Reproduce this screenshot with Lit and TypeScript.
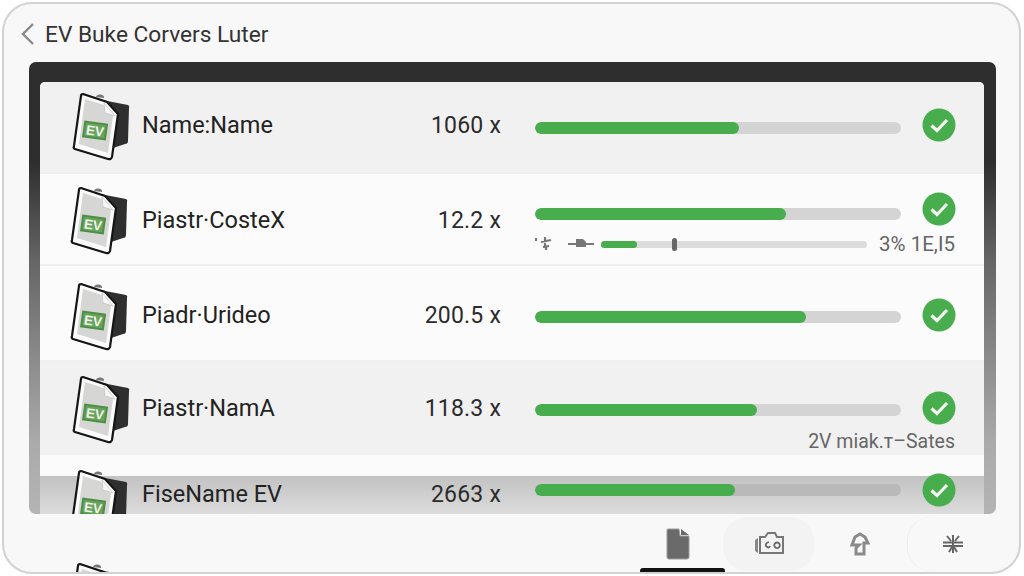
import { LitElement, html, css } from "lit";
import { customElement } from "lit/decorators.js";

const fileIcon = (clip = false) => html`<svg class="file" viewBox="0 0 60 70" width="60" height="70" aria-hidden="true">
  ${clip ? html`<path d="M6 14 Q1 16 0 24 L-1 36 Q1 40 5 39 Z" fill="#2b2b2b"/>` : null}
  <path d="M30 10 L56 15 Q58 16 57 18 L56 51 Q56 54 53 54 L38 59 Z" fill="#2f2f2f"/>
  <path d="M24 7 a4 3 0 0 1 8 1 Z" fill="#777"/>
  <path d="M11 4 L35 12 L46 24 L40 67 Q39 70 36 69 L3 59 Q1 58 2 56 L9 6 Q9 4 11 4 Z" fill="#fbfbfb" stroke="#151515" stroke-width="2.2"/>
  <path d="M13 9 L32 15 L41 26 L36 63 L7 54 Z" fill="#d6d6d5"/>
  <path d="M32 13 L33 23 L43 26 Z" fill="#f7f7f7" stroke="#c4c4c4" stroke-width=".8"/>
  <g transform="rotate(8 23 41)">
    <rect x="11" y="32" width="24" height="17" fill="#4d8f45"/>
    <rect x="13" y="34" width="20" height="13" fill="#6aa35f"/>
    <text x="23" y="45.5" text-anchor="middle" class="ev">EV</text>
  </g>
</svg>`;

const check = (mark = false) => html`<svg class="check" viewBox="0 0 34 34" width="34" height="34" aria-hidden="true">
  ${mark ? html`<path d="M4 24 L-2 30 L3 32 L8 29 Z" fill="#9a9a9a"/>` : null}
  <circle cx="17" cy="17" r="16.5" fill="#48ad4d"/>
  <path d="M9.5 17.5 L15 22.5 L25 12" fill="none" stroke="#f4f8f2" stroke-width="3.2"/>
</svg>`;

type Row = { name: string; value: string; pct: number; cls: string; sub?: string; clip?: boolean };
const rows: Row[] = [
  { name: "Name:Name", value: "1060 x", pct: 55.7, cls: "r1" },
  { name: "Piastr·CosteX", value: "12.2 x", pct: 68.6, cls: "r2", sub: "3% 1E,I5", clip: true },
  { name: "Piadr·Urideo", value: "200.5 x", pct: 74, cls: "r3", clip: true },
  { name: "Piastr·NamA", value: "118.3 x", pct: 60.7, cls: "r4", sub: "2V miak.т–Sates" },
  { name: "FiseName EV", value: "2663 x", pct: 54.6, cls: "r5", clip: true },
];

@customElement("app-root")
export class AppRoot extends LitElement {
  static styles = css`
    :host { display: block; box-sizing: border-box; width: 1024px; height: 576px; padding: 2px 3px 2px 2px; background: #fff; overflow: hidden;
      font-family: Roboto, "Liberation Sans", sans-serif; color: #1d1d1d; }
    .frame { box-sizing: border-box; width: 100%; height: 100%; border: 2px solid #d2d2d2; border-radius: 30px;
      background: #f8f8f8; display: flex; flex-direction: column; overflow: hidden; padding: 0 23px 0 25px; }
    .head { box-sizing: border-box; height: 58px; flex: none; display: flex; align-items: center; gap: 9px; padding: 2px 0 0 0; margin-left: -9px; }
    .head svg { flex: none; }
    .title { font-size: 22.7px; color: #333; white-space: nowrap; }
    .panel { height: 452px; flex: none; box-sizing: border-box; padding: 20px 12px 0 11px; border-radius: 7px; overflow: hidden;
      background: linear-gradient(180deg, #2e2e2e 0, #2e2e2e 100px, #666 200px, #aaa 380px, #b4b4b4 100%); }
    .list { height: 432px; overflow: hidden; border-radius: 5px 5px 0 0; background: #fafafa; }
    .row { display: grid; grid-template-columns: 102px 230px 129px 366px 89px; box-sizing: border-box;
      grid-template-rows: 34px auto; align-content: start; align-items: center; border-bottom: 2px solid #efefef; }
    .icon { grid-column: 1; grid-row: 1; justify-self: start; margin-left: 32px; }
    .file { display: block; overflow: visible; }
    .ev { font: 700 13.5px "Liberation Sans", sans-serif; fill: #eef5e8; }
    .name { grid-column: 2; grid-row: 1; font-size: 23.5px; white-space: nowrap; color: #222; }
    .value { grid-column: 3; grid-row: 1; text-align: right; font-size: 23px; letter-spacing: .2px; white-space: nowrap; color: #2b2b2b; }
    .track { grid-column: 4; grid-row: 1; margin-left: 34px; width: 366px; height: 12px; border-radius: 6px; background: #d4d4d4; overflow: hidden; }
    .fill { height: 100%; border-radius: 6px; background: #48ad4d; }
    .status { grid-column: 5; grid-row: 1; margin-left: 55px; height: 34px; }
    .check { display: block; overflow: visible; }
    .r1 { height: 92px; padding-top: 26px; background: #f1f1f1; }
    .r2 { height: 92px; padding-top: 18px; background: #fbfbfb; }
    .r3 { height: 96px; padding-top: 32px; background: #fbfbfb; }
    .r4 { height: 93px; padding-top: 29px; background: #f1f1f1; border-bottom: 0; }
    .r5 { height: 59px; padding-top: 18px; border-bottom: 0; grid-template-rows: 34px;
      background: linear-gradient(180deg, #fbfbfb 0, #fbfbfb 21px, #c2c2c2 21px, #dcdcdc 100%); }
    .r1 .track { margin-top: 5px; }
    .r3 .track, .r4 .track { margin-top: 4px; }
    .r2 .track { margin-top: 10px; }
    .r2 .name, .r2 .value { grid-row: 1 / span 2; margin-bottom: 6px; }
    .r2 .icon { grid-row: 1 / span 2; margin-top: -8px; margin-left: 30px; }
    .r3 .icon { margin-left: 30px; }
    .r5 .icon { align-self: start; margin-top: -6px; margin-left: 30px; }
    .r5 .name, .r5 .value { margin-top: 8px; }
    .r5 .track { background: #b9b9b9; }
    .sub { grid-column: 4 / span 2; grid-row: 2; display: flex; align-items: center; justify-content: flex-end;
      font-size: 19.5px; color: #666; white-space: nowrap; height: 20px; }
    .r2 .sub { margin-top: 8px; padding-left: 34px; font-size: 20.5px; margin-right: 1px; }
    .r4 .sub { margin-top: 6px; margin-right: 1px; }
    .tools { width: 66px; flex: none; display: block; }
    .mini { width: 266px; flex: none; height: 7px; border-radius: 4px; background: #dcdcdc; position: relative; }
    .mini i { display: block; width: 36px; height: 100%; border-radius: 4px; background: #48ad4d; }
    .mini b { position: absolute; left: 71px; top: -3px; width: 5px; height: 13px; border-radius: 3px; background: #666; }
    .mini-label { margin-left: auto; }
    .foot { flex: 1; min-height: 0; display: flex; align-items: flex-start; overflow: hidden; }
    .peek { padding: 46px 0 0 40px; display: flex; gap: 25px; }
    .peek .name, .peek .value { color: #999; font-size: 18px; margin-top: 10px; letter-spacing: 0; }
    .peek .value { margin-left: 58px; }
    .nav { margin-left: auto; margin-right: -1px; display: flex; height: 58px; }
    .tab { position: relative; display: flex; align-items: center; justify-content: center; box-sizing: border-box; height: 54px; margin-top: 3px; }
    .tab-doc { width: 85px; padding-right: 6px; }
    .tab-doc::after { content: ""; position: absolute; left: 2px; right: -2px; bottom: -1px; height: 4px; background: #111; border-radius: 3px 3px 0 0; }
    .tab-cam { width: 91px; background: #f3f3f3; border-radius: 24px; }
    .tab-up { width: 93px; padding-right: 2px; }
    .tab-star { width: 90px; border-left: 1px solid #ececec; border-radius: 24px 0 0 24px; }
  `;

  private row(r: Row) {
    return html`<div class="row ${r.cls}">
      <div class="icon">${fileIcon(r.clip)}</div>
      <div class="name">${r.name}</div>
      <div class="value">${r.value}</div>
      <div class="track"><div class="fill" style="width:${r.pct}%"></div></div>
      <div class="status">${check(r.cls === "r5")}</div>
      ${r.cls === "r2"
        ? html`<div class="sub">
            <svg class="tools" viewBox="0 0 66 16" height="16" aria-hidden="true">
              <path d="M1 2v3M10 1v9M6 6l10-2M8 11l6-1M11 10v4M33 8h26" fill="none" stroke="#777" stroke-width="2.2"/>
              <path d="M41 3h7l3 3v5h-10z" fill="#777"/>
            </svg>
            <div class="mini"><i></i><b></b></div>
            <span class="mini-label">${r.sub}</span>
          </div>`
        : r.sub
        ? html`<div class="sub">${r.sub}</div>`
        : null}
    </div>`;
  }

  render() {
    return html`<div class="frame">
      <header class="head">
        <svg width="16" height="26" viewBox="0 0 16 26" aria-hidden="true"><path d="M13 3 L3 13 L13 23" fill="none" stroke="#8a8a8a" stroke-width="2.4"/></svg>
        <span class="title">EV Buke Corvers Luter</span>
      </header>
      <section class="panel"><div class="list">${rows.map((r) => this.row(r))}</div></section>
      <footer class="foot">
        <div class="peek">${fileIcon()}<span class="name">Fiselame</span><span class="value">120</span></div>
        <nav class="nav">
          <div class="tab tab-doc"><svg width="26" height="32" viewBox="0 0 26 32" aria-hidden="true"><path d="M2 2 Q2 1 3 1 H14 L15 8 H24 V29 Q24 31 22 31 H4 Q2 31 2 29 Z" fill="#6a6a6a" stroke="#9c9c9c" stroke-width="1"/><path d="M16 1 L24 7 H16 Z" fill="#6a6a6a"/></svg></div>
          <div class="tab tab-cam"><svg width="32" height="24" viewBox="0 0 32 24" aria-hidden="true"><path d="M7 5 H12 L15 1 H22 L24 5 H30 V21 H7 Z" fill="none" stroke="#777" stroke-width="2"/><path d="M2 8 V19 L5 21 V6 Z" fill="#888"/><path d="M16 10 q-4 1 -3 4 q3 3 4 0 M24 10.5 a2.8 2.8 0 1 0 .1 0" fill="none" stroke="#666" stroke-width="1.8"/></svg></div>
          <div class="tab tab-up"><svg width="20" height="24" viewBox="0 0 20 24" aria-hidden="true"><path d="M10 2 L15 5 L18 11 H14 V22 H6 V16 L9 13 H2 L5 5 Z" fill="none" stroke="#8a8a8a" stroke-width="3"/></svg></div>
          <div class="tab tab-star"><svg width="22" height="22" viewBox="0 0 22 22" aria-hidden="true"><path d="M1 9.5 H21 M1 13 H21 M11 2 V20 M5 3 L9 8 M17 3 L13 8 M7 19 L10 14 M15 19 L12 14" stroke="#666" stroke-width="2" fill="none"/></svg></div>
        </nav>
      </footer>
    </div>`;
  }
}
